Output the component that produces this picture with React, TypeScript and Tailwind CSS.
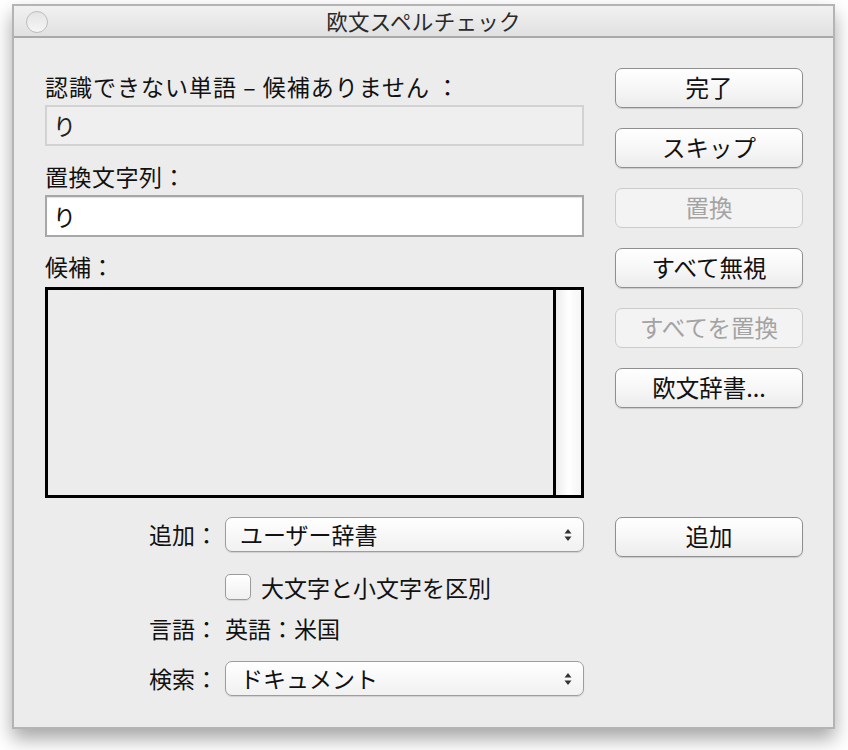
import React from "react";

const font = "font-['Noto_Sans_CJK_JP','Noto_Sans_CJK_SC',sans-serif]";

function PushButton({ label, disabled }: { label: string; disabled?: boolean }) {
  return (
    <div
      className={
        "flex h-[40px] w-[188px] items-center justify-center rounded-[7px] border text-[23.5px] leading-none " +
        (disabled
          ? "border-[#cbcbcb] bg-[#f3f3f3] text-[#a3a3a3]"
          : "border-[#8f8f8f] bg-gradient-to-b from-[#ffffff] via-[#f7f7f7] to-[#ececec] text-[#111] shadow-[0_1px_1px_rgba(0,0,0,0.15)]")
      }
    >
      {label}
    </div>
  );
}

function PopUp({ value }: { value: string }) {
  return (
    <div className="flex h-[35px] w-[359px] items-center justify-between rounded-[7px] border border-[#9d9d9d] bg-gradient-to-b from-[#ffffff] to-[#f1f1f1] pl-[14px] pr-[10px] text-[23px] leading-none text-[#111] shadow-[0_1px_1px_rgba(0,0,0,0.12)]">
      <span>{value}</span>
      <svg width="10" height="16" viewBox="0 0 10 16">
        <path d="M5 2 L8.5 6.5 H1.5 Z" fill="#333" />
        <path d="M5 14 L8.5 9.5 H1.5 Z" fill="#333" />
      </svg>
    </div>
  );
}

export default function App() {
  return (
    <div className={"h-[750px] w-[848px] bg-white pl-[12px] pt-[4px] " + font}>
      <div className="flex h-[725px] w-[823px] flex-col border-2 border-[#b4b4b4] bg-[#ececec] shadow-[0_10px_18px_rgba(0,0,0,0.35)]">
        {/* title bar */}
        <div className="relative flex h-[32px] items-center justify-center border-b-2 border-[#a9a9a9] bg-gradient-to-b from-[#f1f1f1] to-[#e1e1e1]">
          <div className="absolute left-[12px] top-[5px] h-[22px] w-[22px] rounded-full border-[1.5px] border-[#bdbdbd] bg-gradient-to-b from-[#e4e4e4] to-[#f6f6f6]" />
          <span className="text-[21.5px] leading-none tracking-[0.3px] text-[#2a2a2a]">欧文スペルチェック</span>
        </div>

        {/* upper area */}
        <div className="flex gap-[31px] pl-[31px]">
          <div className="flex w-[539px] flex-col text-[23px] text-[#111]">
            <div className="mt-[35px] h-[26px] leading-[26px] tracking-[1px]">認識できない単語 – 候補ありません ：</div>
            <div className="mt-[6px] flex h-[41px] items-center border-2 border-[#d2d2d2] bg-[#efefef] px-[6px] text-[#222]">
              り
            </div>
            <div className="mt-[17px] h-[26px] leading-[26px] tracking-[0.5px]">置換文字列：</div>
            <div className="mt-[6px] flex h-[42px] items-center border-2 border-[#a7a7a7] bg-white px-[6px] shadow-[inset_0_1px_1px_rgba(0,0,0,0.12)]">
              り
            </div>
            <div className="mt-[16px] h-[26px] leading-[26px]">候補：</div>
            <div className="mt-[8px] flex h-[211px] border-[3px] border-black">
              <div className="flex-1 border-r-[3px] border-black bg-[#ececec]" />
              <div className="w-[25px] bg-gradient-to-r from-[#ececec] via-[#ffffff] to-[#f5f5f5]" />
            </div>
          </div>

          <div className="mt-[30px] flex flex-col gap-[20px]">
            <PushButton label="完了" />
            <PushButton label="スキップ" />
            <PushButton label="置換" disabled />
            <PushButton label="すべて無視" />
            <PushButton label="すべてを置換" disabled />
            <PushButton label="欧文辞書..." />
          </div>
        </div>

        {/* lower area */}
        <div className="mt-[19px] flex flex-col pl-[31px] text-[23px] text-[#111]">
          <div className="flex items-start gap-[31px]">
            <div className="flex w-[539px] items-center gap-[7px]">
              <div className="w-[173px] text-right leading-none">追加：</div>
              <PopUp value="ユーザー辞書" />
            </div>
            <PushButton label="追加" />
          </div>

          <div className="mt-[17px] flex items-center gap-[10px] pl-[180px]">
            <div className="h-[26px] w-[26px] rounded-[5px] border border-[#9b9b9b] bg-gradient-to-b from-[#ffffff] to-[#f0f0f0] shadow-[0_1px_1px_rgba(0,0,0,0.1)]" />
            <span className="leading-none">大文字と小文字を区別</span>
          </div>

          <div className="mt-[17px] flex items-center gap-[7px]">
            <div className="w-[173px] text-right leading-none">言語：</div>
            <span className="leading-none">英語：米国</span>
          </div>

          <div className="mt-[21px] flex items-center gap-[7px]">
            <div className="w-[173px] text-right leading-none">検索：</div>
            <PopUp value="ドキュメント" />
          </div>
        </div>
      </div>
    </div>
  );
}
